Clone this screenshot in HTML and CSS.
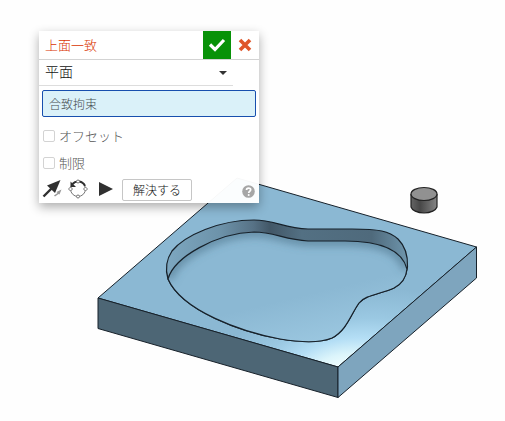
FILE: index.html
```html
<!DOCTYPE html>
<html lang="ja">
<head>
<meta charset="utf-8">
<meta name="viewport" content="width=device-width, initial-scale=1">
<title>上面一致</title>
<link rel="stylesheet" href="styles.css">
</head>
<body>
<main class="workspace">
  <svg class="model" width="505" height="421" viewBox="0 0 505 421" aria-hidden="true">
    <defs>
      <radialGradient id="shine" gradientUnits="userSpaceOnUse" cx="0" cy="0" r="1" gradientTransform="translate(340 370) rotate(-14) scale(150 74)">
        <stop offset="0" stop-color="#f4ffff"/>
        <stop offset=".2" stop-color="#dcf5fb"/>
        <stop offset=".4" stop-color="#b4def5"/>
        <stop offset=".65" stop-color="#9ac8e2"/>
        <stop offset="1" stop-color="#8bb8d3"/>
      </radialGradient>
      <linearGradient id="floor" gradientUnits="userSpaceOnUse" x1="284" y1="300" x2="296" y2="350">
        <stop offset="0" stop-color="#8bb8d3"/>
        <stop offset="1" stop-color="#9bc7e0"/>
      </linearGradient>
      <linearGradient id="wall" gradientUnits="userSpaceOnUse" x1="166" y1="0" x2="408" y2="0">
        <stop offset="0" stop-color="#7da7c0"/>
        <stop offset=".22" stop-color="#6d93aa"/>
        <stop offset=".36" stop-color="#577286"/>
        <stop offset=".43" stop-color="#425767"/>
        <stop offset=".56" stop-color="#537083"/>
        <stop offset=".85" stop-color="#4f6a7c"/>
        <stop offset="1" stop-color="#6f96ad"/>
      </linearGradient>
      <linearGradient id="pin" x1="0" x2="1" y1="0" y2="0">
        <stop offset="0" stop-color="#646464"/>
        <stop offset=".35" stop-color="#484848"/>
        <stop offset="1" stop-color="#858585"/>
      </linearGradient>
      <filter id="soft" x="-10%" y="-20%" width="120%" height="140%"><feGaussianBlur stdDeviation="4"/></filter>
      <path id="pocket" d="M168 279C165 269 166 260 172 251C185 235 220 220 254 220C274 220 284 228 308 229H352C379 229 389 231 398 239C405 246 408 257 407.500 267C406 279 400 285 394 288C381 294 365 295 359 303C351 314 347 330 332 338C318 344 298 342 280 339C242 332 182 311 168 279Z"/>
      <path id="floorshape" d="M168 279C174 257 217 233 254 232C274 232 285 240 308 241H345C382 241 402 250 407 269C406 279 400 285 394 288C381 294 365 295 359 303C351 314 347 330 332 338C318 344 298 342 280 339C242 332 182 311 168 279Z"/>
      <clipPath id="floorclip"><use href="#floorshape"/></clipPath>
    </defs>
    <g stroke="#17212a" stroke-linejoin="round">
      <path fill="url(#shine)" d="M98 298 237 178 476.500 247 338 367Z"/>
      <path fill="#4d6675" d="M98 298 338 367V397.500L98 328.500Z"/>
      <path fill="#7ea5be" d="M338 367 476.500 247V278L338 397.500Z"/>
      <use href="#pocket" fill="url(#wall)" stroke-width="1.200"/>
      <use href="#floorshape" fill="url(#floor)" stroke="none"/>
      <g clip-path="url(#floorclip)">
        <path d="M168 279C174 257 217 233 254 232C274 232 285 240 308 241H345C382 241 402 250 407 269" fill="none" stroke="#456a80" stroke-opacity=".6" stroke-width="9" filter="url(#soft)"/>
      </g>
      <use href="#floorshape" fill="none" stroke-width="1.200"/>
    </g>
    <g stroke="#222" stroke-width="1.200">
      <path fill="url(#pin)" d="M411 194.500V207C412 210 417 213 424 213S436 210 437 207V194.500Z"/>
      <ellipse fill="#919191" cx="424" cy="194" rx="13" ry="6.500"/>
    </g>
  </svg>

  <form class="dialog" onsubmit="return false">
    <header class="dialog-header">
      <h1 class="dialog-title">上面一致</h1>
      <button class="header-button accept" type="button" aria-label="確定">
        <svg width="18" height="18" viewBox="0 0 18 18"><path d="M2 8.500 7 13.500 16 4" fill="none" stroke="#fff" stroke-width="3.200"/></svg>
      </button>
      <button class="header-button cancel" type="button" aria-label="キャンセル">
        <svg width="14" height="14" viewBox="0 0 14 14"><path d="M2 2 12 12M12 2 2 12" stroke="#df5529" stroke-width="3.600"/></svg>
      </button>
    </header>

    <div class="type-row">
      <select class="type-select" aria-label="種類"><option>平面</option></select>
      <svg class="caret" width="8" height="4" viewBox="0 0 8 4" aria-hidden="true"><path d="M0 0H8L4 4Z" fill="#333"/></svg>
    </div>

    <input class="entity-field" type="text" placeholder="合致拘束" aria-label="合致拘束">

    <div class="options">
      <label class="option"><input class="tick" type="checkbox">オフセット</label>
      <label class="option"><input class="tick" type="checkbox">制限</label>
    </div>

    <footer class="actions">
      <button class="icon-button" type="button" aria-label="軸を反転">
        <svg width="20" height="20" viewBox="0 0 20 20"><path d="M1.500 17.500 10 9" stroke="#303030" stroke-width="2.400"/><path d="M18.500 1 5 6.500 13 14Z" fill="#303030"/><path d="M19.500 10.500 14.500 13 15.500 14 12 16.500 13 17.500 16.500 15 17.500 15.500Z" fill="#999"/></svg>
      </button>
      <button class="icon-button" type="button" aria-label="軸の向きを変更">
        <svg width="20" height="20" viewBox="0 0 20 20"><circle cx="10" cy="10" r="7.500" fill="none" stroke="#777"/><path d="M4.500 5A7.500 7.500 0 0 1 17 7" fill="none" stroke="#303030" stroke-width="2"/><path d="M2.500 2.500V8H8Z" fill="#303030"/><g fill="#fff" stroke="#777"><circle cx="10" cy="2.500" r="1.500"/><circle cx="10" cy="17.500" r="1.500"/><path d="M.500 10 2.500 8 4.500 10 2.500 12ZM15.500 10 17.500 8 19.500 10 17.500 12Z"/></g></svg>
      </button>
      <button class="icon-button play" type="button" aria-label="再生">
        <svg width="14" height="14" viewBox="0 0 14 14"><path d="M0 0V14L14 7Z" fill="#303030"/></svg>
      </button>
      <button class="solve" type="button">解決する</button>
      <button class="icon-button help" type="button" aria-label="ヘルプ">
        <svg width="13" height="13" viewBox="0 0 13 13"><circle cx="6.500" cy="6.500" r="6.300" fill="#a6a6a6"/><path d="M4.500 5C4.500 2.500 8.700 2.500 8.700 4.800C8.700 6.300 6.700 6.200 6.700 8" fill="none" stroke="#fff" stroke-width="1.700"/><circle cx="6.700" cy="10" r="1" fill="#fff"/></svg>
      </button>
    </footer>
  </form>
</main>
</body>
</html>
```
FILE: styles.css
```css
* {
  box-sizing: border-box;
}

body {
  margin: 0;
  background: #fefefe;
  font-family: "Noto Sans CJK JP", sans-serif;
  color: #111;
}

.workspace {
  position: relative;
  min-height: 100vh;
  padding: 31px 39px;
  overflow: hidden;
}

.model {
  position: absolute;
  top: 0;
  left: 0;
}

.dialog {
  position: relative;
  width: 100%;
  max-width: 220px;
  background: rgba(255, 255, 255, .97);
  box-shadow: 0 4px 10px rgba(0, 0, 0, .32);
}

button,
input,
select {
  margin: 0;
  font-family: inherit;
}

.dialog-header {
  display: flex;
  height: 29px;
  border-bottom: 1px solid #d3d3d3;
}

.dialog-title {
  flex: 1;
  margin: 0;
  padding-left: 6px;
  font-size: 13px;
  font-weight: 300;
  line-height: 28px;
  color: #d93400;
}

.header-button {
  display: grid;
  place-items: center;
  width: 28px;
  padding: 0;
  border: 0;
  background: none;
}

.accept {
  background: #089208;
}

.type-row {
  display: flex;
  align-items: center;
  margin-right: 26px;
  border-bottom: 1px solid #ddd;
}

.type-select {
  flex: 1;
  height: 25px;
  padding: 0 0 3px 6px;
  border: 0;
  background: none;
  appearance: none;
  font-size: 14px;
  font-weight: 300;
  line-height: 22px;
  color: #111;
}

.caret {
  margin-right: 6px;
  pointer-events: none;
}

.entity-field {
  display: block;
  width: calc(100% - 6px);
  height: 27px;
  margin: 4px 3px 0;
  padding: 0 6px;
  border: 1px solid #174fae;
  border-radius: 2px;
  background: #daf1f9;
  font-size: 12px;
  font-weight: 300;
}

.entity-field::placeholder {
  color: #454c50;
  opacity: 1;
}

.options {
  display: grid;
  gap: 7px;
  padding: 9px 4px 0;
}

.option {
  display: flex;
  align-items: center;
  gap: 4px;
  height: 20px;
  font-size: 13px;
  font-weight: 300;
  line-height: 20px;
  color: #555;
}

.tick {
  width: 12px;
  height: 12px;
  border: 1px solid #d3d3d3;
  border-radius: 2px;
  background: #fff;
  appearance: none;
}

.actions {
  display: flex;
  align-items: center;
  height: 30px;
  padding: 2px 4px 0 3px;
}

.icon-button {
  display: grid;
  place-items: center;
  margin-right: 6px;
  padding: 0;
  border: 0;
  background: none;
}

.play {
  margin: 0 9px 0 5px;
}

.solve {
  width: 70px;
  height: 22px;
  margin-top: 2px;
  padding: 0;
  border: 1px solid #c6c6c6;
  border-radius: 2px;
  background: #fff;
  font-size: 12px;
  font-weight: 300;
  line-height: 18px;
  color: #111;
}

.help {
  align-self: flex-end;
  margin: 0 0 5px auto;
}
```
